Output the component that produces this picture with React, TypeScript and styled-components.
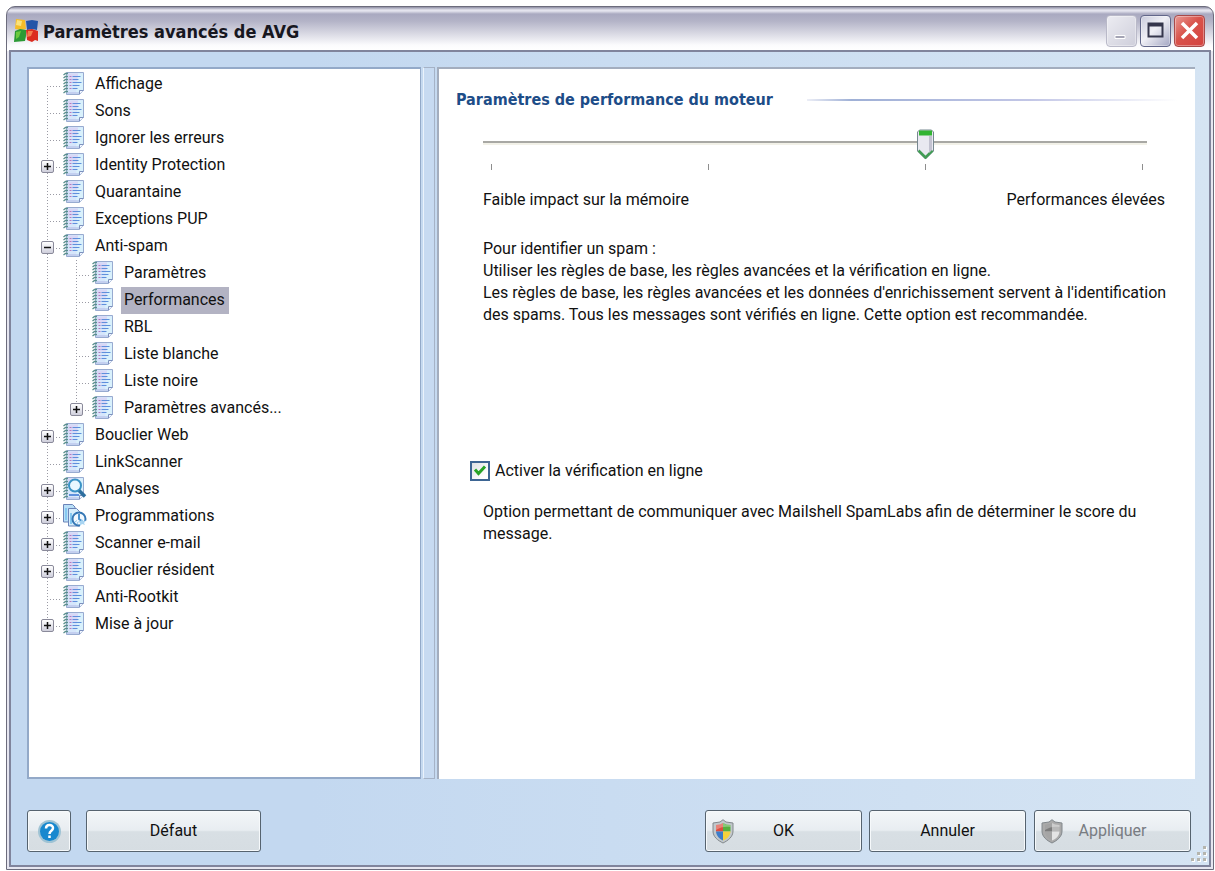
import React, { useState } from "react";
import styled, { createGlobalStyle, css } from "styled-components";

const Global = createGlobalStyle`
  *, *::before, *::after { box-sizing: border-box; }
  body { margin: 0; background: #fff; color: #111; font: 16px/22px Roboto, "Liberation Sans", Arial, sans-serif; }
  button, input { font: inherit; color: inherit; }
  ul, h1, h2, p { margin: 0; padding: 0; }
  ul { list-style: none; }
`;

const Page = styled.div`
  display: flex;
  min-height: 100vh;
  padding: 6px 1px 1px 6px;
`;

const Window = styled.main`
  flex: 1;
  display: flex;
  flex-direction: column;
  border: 1px solid #6c6c7c;
  border-radius: 9px 9px 0 0;
  background: linear-gradient(#8d8da3, #e4e4ee 3px, #e4e4ee 4px, #a9a9c0 7px, #b3b3c7 14px, #fbfbfd 38px, #fff);
  background-size: 100% 44px;
  background-color: #e6e6f0;
  background-repeat: no-repeat;
  overflow: hidden;
`;

const TitleBar = styled.header`
  display: flex;
  align-items: center;
  height: 43px;
  padding: 4px 8px 0 7px;
`;

const Title = styled.h1`
  flex: 1;
  padding: 3px 0 0 4px;
  font: bold 18px/24px "DejaVu Sans Condensed", "DejaVu Sans", sans-serif;
  color: #17171f;
`;

const CaptionButtons = styled.div`
  display: flex;
  gap: 3px;
`;

const CaptionButton = styled.button<{ $tone: "plain" | "blue" | "red" }>`
  display: grid;
  place-items: center;
  width: 31px;
  height: 32px;
  padding: 0;
  border: 1px solid ${p => ({ plain: "#b9b9c8", blue: "#62678a", red: "#a84a4a" })[p.$tone]};
  border-radius: 4px;
  box-shadow: inset 0 0 0 1px rgba(255, 255, 255, 0.35);
  background: ${p => ({
    plain: "linear-gradient(135deg, #ececf2, #cfcfdb)",
    blue: "linear-gradient(135deg, #c9cbdc, #f0f0f6 45%, #a3a6c2)",
    red: "linear-gradient(135deg, #e89a94, #d9534b 45%, #d4433f)",
  })[p.$tone]};
`;

const Client = styled.div`
  position: relative;
  flex: 1;
  display: flex;
  flex-direction: column;
  margin: 0 2px 2px;
  border: 2px solid #80849c;
  background: linear-gradient(90deg, #c3d8f0 0 25%, #d5e4f3);
`;

const Panels = styled.div`
  flex: 1;
  display: grid;
  grid-template-columns: 394px 16px minmax(0, 1fr);
  padding: 15px 14px 0 16px;
`;

const TreePanel = styled.nav`
  padding: 2px 4px;
  border: 1px solid #93a9c8;
  border-width: 2px 1px 2px 2px;
  background: #fff;
`;

const Splitter = styled.div`
  margin: 0 2px;
  border: 1px solid #a5b2c6;
  border-left-color: #eaf2fb;
  background: #c7daf1;
`;

const DetailPanel = styled.section`
  padding: 19px 26px 0 17px;
  border: solid #a3adbe;
  border-width: 2px 0 0 2px;
  background: #fff;
`;

const Row = styled.div`
  display: flex;
  height: 27px;
`;

const dots = "#9a9aa4 0 1px, transparent 1px 3px";
const Guide = styled.span<{ $from: number; $to: string; $branch: boolean }>`
  display: flex;
  justify-content: center;
  width: 29px;
  padding-top: 8px;
  background-image: repeating-linear-gradient(${dots})${p => p.$branch && css`, repeating-linear-gradient(90deg, ${dots})`};
  background-size: 1px ${p => p.$to}, 15px 1px;
  background-position: 14px ${p => p.$from}px, 14px 15px;
  background-repeat: no-repeat;
`;

const Toggle = styled.button`
  display: grid;
  place-items: center;
  width: 13px;
  height: 13px;
  padding: 0;
  border: 1px solid #8a8a9a;
  border-radius: 2px;
  background: linear-gradient(#fff, #cfcfdc);
`;

const Label = styled.a<{ $selected?: boolean }>`
  margin-left: 8px;
  padding: 0 4px 0 3px;
  line-height: 26px;
  color: inherit;
  text-decoration: none;
  background: ${p => (p.$selected ? "#b3b3c3" : "none")};
`;

const IconSvg = styled.svg`
  display: block;
  flex: none;
`;

const NodeIcon = styled(IconSvg)`
  margin: 1px 0 0 1px;
  overflow: visible;
`;

const SectionHead = styled.div`
  display: flex;
  align-items: center;
  gap: 34px;
`;

const SectionTitle = styled.h2`
  font: bold 16px/24px "DejaVu Sans Condensed", "DejaVu Sans", sans-serif;
  color: #1d4d88;
`;

const Rule = styled.div`
  flex: 1;
  height: 2px;
  margin-right: -9px;
  background: linear-gradient(90deg, #eceef6, #9fb0d6 12%, #c2c6e6 60%, #fff);
`;

const SliderBlock = styled.div`
  padding: 17px 18px 0 27px;
`;

const thumb = `url("data:image/svg+xml,%3Csvg xmlns='http://www.w3.org/2000/svg' width='17' height='31'%3E%3Cpath d='M2.500 1h12l2 2v19l-8 8-8-8V3z' fill='%23e9e9f1' stroke='%23778890'/%3E%3Cpath d='M1.500 21.500l7 7 7-7' fill='none' stroke='%23429c55' stroke-width='2.500'/%3E%3Cpath d='M2 1.500h13v5H2z' fill='%2332b432'/%3E%3Cpath d='M12 7h3v14l-3 3z' fill='%23c2c2d0'/%3E%3C/svg%3E")`;

const Range = styled.input`
  appearance: none;
  display: block;
  width: 100%;
  height: 31px;
  margin: 0;
  background: linear-gradient(#a8a8a4 0 2px, #f2f1e8 2px 4px) 0 12px / calc(100% - 4px) 4px no-repeat;
  &::-webkit-slider-thumb {
    appearance: none;
    width: 17px;
    height: 31px;
    background: ${thumb} no-repeat;
  }
`;

const Ticks = styled.div`
  display: flex;
  justify-content: space-between;
  padding: 4px 8px 0;
`;

const Tick = styled.span`
  width: 1px;
  height: 6px;
  background: #8e8e8e;
`;

const Ends = styled.div`
  display: flex;
  justify-content: space-between;
  padding: 19px 4px 0 27px;
`;

const Text = styled.p<{ $gap: number }>`
  margin-top: ${p => p.$gap}px;
  padding-left: 27px;
  white-space: nowrap;
`;

const Check = styled.label`
  display: flex;
  align-items: center;
  gap: 5px;
  margin: 134px 0 0 14px;
`;

const CheckBox = styled.input`
  appearance: none;
  width: 20px;
  height: 20px;
  margin: 0;
  border: 2px solid #3d6593;
  background: linear-gradient(135deg, #dfe1e4, #fff 80%);
  &:checked {
    background: url("data:image/svg+xml,%3Csvg xmlns='http://www.w3.org/2000/svg' viewBox='0 0 16 16'%3E%3Cpath d='M3 6.500l3.500 4 6.500-7' fill='none' stroke='%2328a428' stroke-width='3'/%3E%3C/svg%3E"),
      linear-gradient(135deg, #dfe1e4, #fff 80%);
  }
`;

const Footer = styled.footer`
  display: flex;
  align-items: center;
  gap: 7px;
  padding: 31px 18px 13px 16px;
`;

const Spacer = styled.div`
  flex: 1;
`;

const Button = styled.button<{ $width: number; $gap?: number }>`
  display: grid;
  grid-template-columns: 22px 1fr 22px;
  align-items: center;
  width: ${p => p.$width}px;
  height: 42px;
  margin-left: ${p => p.$gap || 0}px;
  padding: 0 6px;
  border: 1px solid #56636f;
  border-radius: 3px;
  box-shadow: inset 0 0 0 1px #f6f9fb;
  background: linear-gradient(#f3f6f8, #e8edf1 48%, #d8dfe4 52%, #d6dde2);
  &:disabled { color: #787c82; }
`;

const ButtonText = styled.span`
  grid-column: 2;
`;

const HelpButton = styled(Button)`
  display: flex;
  justify-content: center;
`;

const Grip = styled(IconSvg)`
  position: absolute;
  right: 0;
  bottom: 0;
`;

function Notebook({ kind = "note" }: { kind?: Kind }) {
  if (kind === "schedule")
    return (
      <NodeIcon width="21" height="23" viewBox="0 0 21 23">
        <path d="M.5.5h9l2.500 2.500V18H.5z" fill="#b9dff7" stroke="#6b84b8" />
        <path d="M5.500 4.500h8l3 3V22h-11z" fill="#d6eefc" stroke="#6b84b8" />
        <path d="M3 4v12M8 9v11" stroke="#85c8f0" strokeWidth="2" />
        <circle cx="16" cy="15" r="6.500" fill="#f3f9fe" stroke="#3577b5" strokeWidth="2" />
        <path d="M16 10v5l3.500 2.500" fill="none" stroke="#4b94cf" strokeWidth="2" />
        <path d="M12 18l2-1.500M14 20l1-2" stroke="#8cc4ea" />
        <path d="M17 17l7 0-3 6h-4z" fill="#fff" />
        <path d="M19 15l1 2 3-.5-2 2.500 1 2-3-1-2 2v-3l-2-2h3z" fill="#a9d5f2" />
      </NodeIcon>
    );
  return (
    <NodeIcon width="21" height="23" viewBox="0 0 21 23">
      <path d="M3.500.5h17v18l-4 4h-13z" fill="#d6e6fb" stroke="#98abd0" />
      <path d="M5 1.500h10v8H5z" fill="#d9d3f5" opacity=".8" />
      <path d="M15 1.500h5v17l-3 3h-4z" fill="#d9f2fc" opacity=".9" />
      <path d="M4 21h12" stroke="#b0b8e4" />
      <path d="M16.500 22v-3.500h4" fill="#f2f6ff" stroke="#7c90bd" />
      {[1, 4, 7, 10, 13, 16, 19].map(y => (
        <path key={y} d={`M.5 ${y + 2}l2-1.500h2.500`} fill="none" stroke="#5a8f8d" strokeWidth="1.300" />
      ))}
      {kind === "note" &&
        [4.500, 7.500, 10.500, 13.500, 16.500].map((y, i) => (
          <g key={y}>
            <path d={`M6.500 ${y}h2`} stroke="#b478be" />
            <path d={`M9.500 ${y}h${[8, 6, 9, 7, 5][i]}`} stroke="#5e90dc" />
          </g>
        ))}
      {kind === "search" && (
        <g>
          <path d="M6 18h10" stroke="#5e90dc" strokeWidth="2" />
          <circle cx="12" cy="8.500" r="6" fill="#e9f7ff" stroke="#3a93c6" strokeWidth="2" />
          <path d="M16 13.500l6 6" stroke="#2d6f9f" strokeWidth="3.500" />
        </g>
      )}
    </NodeIcon>
  );
}

function Logo() {
  return (
    <IconSvg width="25" height="25" viewBox="0 0 25 25">
      <path d="M2 1l9 1 1 9-5 1-6-1z" fill="#f5bd27" />
      <path d="M12 3l6-1 6 1-1 9-5-1-5 1z" fill="#2455a8" />
      <path d="M1 13l5-2 6 1v6l-1 5-11 1z" fill="#2c9a35" />
      <path d="M12 12l6-1 6 2v10l-3-1-3 2-5-2z" fill="#dc2c20" />
      <path d="M3 2l5 1-1 5-5-1z" fill="#fbe27a" />
      <path d="M14 13l5 0-2 5-4 1z" fill="#f47c4c" />
      <path d="M2 14l5-1-2 6-3 2z" fill="#6bc93f" />
    </IconSvg>
  );
}

function Shield({ gray }: { gray?: boolean }) {
  const c = gray ? ["#7c7c7c", "#b8b8b8", "#a5a5a5", "#e4e4e4"] : ["#dd4c3e", "#55b03e", "#3d7cc9", "#f5d23c"];
  const outline = "M11 .7l3 2.300 7 1v8c0 6-5 9.500-10 12C6 21.500 1 18 1 12V4l7-1z";
  return (
    <IconSvg width="22" height="25" viewBox="0 0 22 25">
      <path d={outline} fill={gray ? "#aaa" : "#c2c8cc"} stroke="#82888c" />
      <path d="M11 4v8.500H4V6l4-.5z" fill={c[0]} />
      <path d="M11 4l3.500 1.500 4 .5v6.500H11z" fill={c[1]} />
      <path d="M4 12.500h7v9C7 19.500 4.500 17 4 12.500z" fill={c[2]} />
      <path d="M11 12.500h7.500c-.5 4.500-3 7-7.500 9z" fill={c[3]} />
      <path d="M4 6l4-.5 3-1.500 3 1.500 4.500.5v2C14 7 8 8 4 11z" fill="#fff" opacity=".3" />
    </IconSvg>
  );
}

type Kind = "note" | "search" | "schedule";
type Node = { label: string; expandable?: boolean; kind?: Kind; children?: Node[] };

const nodes: Node[] = [
  { label: "Affichage" },
  { label: "Sons" },
  { label: "Ignorer les erreurs" },
  { label: "Identity Protection", expandable: true },
  { label: "Quarantaine" },
  { label: "Exceptions PUP" },
  {
    label: "Anti-spam",
    expandable: true,
    children: [
      { label: "Paramètres" },
      { label: "Performances" },
      { label: "RBL" },
      { label: "Liste blanche" },
      { label: "Liste noire" },
      { label: "Paramètres avancés...", expandable: true },
    ],
  },
  { label: "Bouclier Web", expandable: true },
  { label: "LinkScanner" },
  { label: "Analyses", expandable: true, kind: "search" },
  { label: "Programmations", expandable: true, kind: "schedule" },
  { label: "Scanner e-mail", expandable: true },
  { label: "Bouclier résident", expandable: true },
  { label: "Anti-Rootkit" },
  { label: "Mise à jour", expandable: true },
];

function TreeItem({ node, nested, first, last, selected, onSelect }: {
  node: Node; nested?: boolean; first: boolean; last: boolean; selected: string; onSelect: (label: string) => void;
}) {
  const [open, setOpen] = useState(!!node.children);
  return (
    <li>
      <Row>
        {nested && <Guide $from={0} $to="100%" $branch={false} />}
        <Guide $from={first ? 15 : 0} $to={last ? "15px" : "100%"} $branch>
          {node.expandable && (
            <Toggle aria-label={node.label} aria-expanded={open} onClick={() => setOpen(!open)}>
              <IconSvg width="7" height="7" viewBox="0 0 7 7">
                <path d={open ? "M0 3.500h7" : "M0 3.500h7M3.500 0v7"} stroke="#111" strokeWidth="1.500" />
              </IconSvg>
            </Toggle>
          )}
        </Guide>
        <Notebook kind={node.kind} />
        <Label href="#" $selected={selected === node.label} onClick={() => onSelect(node.label)}>{node.label}</Label>
      </Row>
      {open && node.children && (
        <ul>
          {node.children.map((child, i, all) => (
            <TreeItem key={child.label} node={child} nested first={false} last={i === all.length - 1} selected={selected} onSelect={onSelect} />
          ))}
        </ul>
      )}
    </li>
  );
}

export default function App() {
  const [selected, setSelected] = useState("Performances");
  return (
    <Page>
      <Global />
      <Window>
        <TitleBar>
          <Logo />
          <Title>Paramètres avancés de AVG</Title>
          <CaptionButtons>
            <CaptionButton $tone="plain" aria-label="Réduire">
              <IconSvg width="19" height="20"><path d="M3 14.500h10v3H3z" fill="#a4a4b4" stroke="#fff" /></IconSvg>
            </CaptionButton>
            <CaptionButton $tone="blue" aria-label="Agrandir">
              <IconSvg width="17" height="17"><path d="M1.500 1.500h14v13h-14z" fill="none" stroke="#35364c" strokeWidth="2" /><path d="M1 3h15" stroke="#35364c" strokeWidth="3" /></IconSvg>
            </CaptionButton>
            <CaptionButton $tone="red" aria-label="Fermer">
              <IconSvg width="19" height="19"><path d="M2 2l15 15M17 2L2 17" stroke="#fff" strokeWidth="3.500" /></IconSvg>
            </CaptionButton>
          </CaptionButtons>
        </TitleBar>
        <Client>
          <Panels>
            <TreePanel>
              <ul>
                {nodes.map((node, i) => (
                  <TreeItem key={node.label} node={node} first={i === 0} last={i === nodes.length - 1} selected={selected} onSelect={setSelected} />
                ))}
              </ul>
            </TreePanel>
            <Splitter />
            <DetailPanel>
              <SectionHead>
                <SectionTitle>Paramètres de performance du moteur</SectionTitle>
                <Rule />
              </SectionHead>
              <SliderBlock>
                <Range type="range" min="0" max="3" defaultValue="2" aria-label="Performance du moteur" />
                <Ticks><Tick /><Tick /><Tick /><Tick /></Ticks>
              </SliderBlock>
              <Ends>
                <span>Faible impact sur la mémoire</span>
                <span>Performances élevées</span>
              </Ends>
              <Text $gap={27}>
                Pour identifier un spam :<br />
                Utiliser les règles de base, les règles avancées et la vérification en ligne.<br />
                Les règles de base, les règles avancées et les données d'enrichissement servent à l'identification<br />
                des spams. Tous les messages sont vérifiés en ligne. Cette option est recommandée.
              </Text>
              <Check>
                <CheckBox type="checkbox" defaultChecked />
                Activer la vérification en ligne
              </Check>
              <Text $gap={19}>
                Option permettant de communiquer avec Mailshell SpamLabs afin de déterminer le score du<br />
                message.
              </Text>
            </DetailPanel>
          </Panels>
          <Footer>
            <HelpButton $width={44} aria-label="Aide">
              <IconSvg width="25" height="25" viewBox="0 0 25 25">
                <circle cx="12.500" cy="12.500" r="11.500" fill="#9fc3d4" />
                <circle cx="12.500" cy="12.500" r="9.500" fill="#1788cf" />
                <path d="M9 9.500c0-4.500 7-4.500 7-.5 0 3-3.500 2.500-3.500 6M12.500 16.500v2.500" fill="none" stroke="#fff" strokeWidth="2.500" />
              </IconSvg>
            </HelpButton>
            <Button $width={175} $gap={8}><ButtonText>Défaut</ButtonText></Button>
            <Spacer />
            <Button $width={157}><Shield /><ButtonText>OK</ButtonText></Button>
            <Button $width={157}><ButtonText>Annuler</ButtonText></Button>
            <Button $width={157} $gap={1} disabled><Shield gray /><ButtonText>Appliquer</ButtonText></Button>
          </Footer>
          <Grip width="20" height="20" viewBox="0 0 20 20">
            {[[14, 1], [8, 7], [14, 7], [2, 13], [8, 13], [14, 13]].map(([x, y]) => (
              <g key={`${x}-${y}`}>
                <path d={`M${x + 1} ${y + 1}h3v3h-3z`} fill="#fff" />
                <path d={`M${x} ${y}h3v3h-3z`} fill="#b5b5ae" />
              </g>
            ))}
          </Grip>
        </Client>
      </Window>
    </Page>
  );
}
